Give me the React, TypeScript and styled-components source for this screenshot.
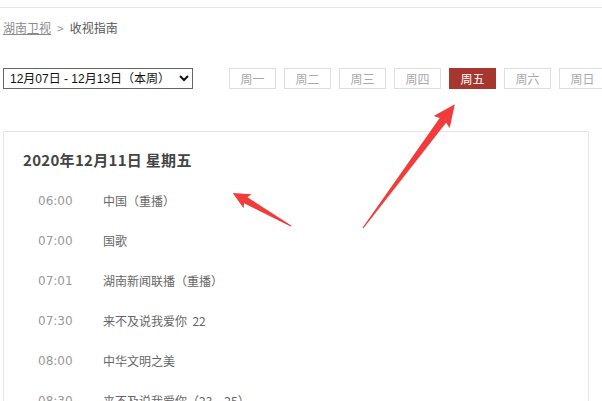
import React, { useState } from 'react';
import styled, { createGlobalStyle } from 'styled-components';

const weekDays = ['周一', '周二', '周三', '周四', '周五', '周六', '周日'];

const programs = [
  { time: '06:00', title: '中国（重播）' },
  { time: '07:00', title: '国歌' },
  { time: '07:01', title: '湖南新闻联播（重播）' },
  { time: '07:30', title: '来不及说我爱你  22' },
  { time: '08:00', title: '中华文明之美' },
  { time: '08:30', title: '来不及说我爱你（23、25）' },
];

// annotation arrow: drawn along +x from the tail, then rotated into place
const arrowPoints = (len: number, head: number, half: number, body: number) =>
  [
    [0, -0.6],
    [len - head + 2, -body],
    [len - head, -half],
    [len, 0],
    [len - head, half],
    [len - head + 2, body],
    [0, 0.6],
  ]
    .map(([x, y]) => `${x},${y}`)
    .join(' ');

const arrows = [
  { x: 291, y: 226, angle: -150.4, len: 67, head: 17, half: 8, body: 3.5 },
  { x: 363, y: 228, angle: -53.4, len: 154, head: 22, half: 10, body: 4 },
];

export default function App() {
  const [activeDay, setActiveDay] = useState('周五');

  return (
    <Page>
      <GlobalStyle />
      <TopRule />
      <Breadcrumb>
        <a href="#">湖南卫视</a>
        <span className="sep">&gt;</span>
        <span>收视指南</span>
      </Breadcrumb>
      <Toolbar>
        <WeekSelect defaultValue="this">
          <option value="this">12月07日 - 12月13日（本周）</option>
        </WeekSelect>
        <DayTabs>
          {weekDays.map((day) => (
            <DayTab key={day} active={activeDay === day} onClick={() => setActiveDay(day)}>
              {day}
            </DayTab>
          ))}
        </DayTabs>
      </Toolbar>
      <Card>
        <DateTitle>2020年12月11日 星期五</DateTitle>
        <ProgramList>
          {programs.map((p) => (
            <ProgramRow key={p.time}>
              <Time>{p.time}</Time>
              <Title>{p.title}</Title>
            </ProgramRow>
          ))}
        </ProgramList>
      </Card>
      <Annotations width="602" height="401" viewBox="0 0 602 401">
        {arrows.map((a, i) => (
          <polygon
            key={i}
            points={arrowPoints(a.len, a.head, a.half, a.body)}
            transform={`translate(${a.x} ${a.y}) rotate(${a.angle})`}
            fill="#f23b3b"
          />
        ))}
      </Annotations>
    </Page>
  );
}

const GlobalStyle = createGlobalStyle`
  html, body {
    margin: 0;
    padding: 0;
    background: #fff;
    overflow: hidden;
  }
`;

const Page = styled.div`
  position: relative;
  width: 602px;
  height: 401px;
  overflow: hidden;
  font-family: "Microsoft YaHei", "Noto Sans CJK SC", sans-serif;
  font-size: 12px;
  color: #555;
`;

const TopRule = styled.div`
  height: 7px;
  border-bottom: 1px solid #e6e6e6;
`;

const Breadcrumb = styled.div`
  height: 40px;
  line-height: 40px;
  padding-left: 3px;
  color: #555;

  a {
    color: #8a8a8a;
    text-decoration: underline;
  }

  .sep {
    color: #999;
    margin: 0 6px;
  }
`;

const Toolbar = styled.div`
  display: flex;
  align-items: center;
  margin-top: 20px;
  padding-left: 3px;
  height: 21px;
  width: 700px;
`;

const WeekSelect = styled.select`
  width: 190px;
  height: 21px;
  padding: 0 2px;
  border: 1px solid #666;
  border-radius: 0;
  background: #fff;
  color: #111;
  font-family: "Liberation Sans", "Noto Sans CJK SC", sans-serif;
  font-size: 12px;
`;

const DayTabs = styled.div`
  display: flex;
  gap: 8px;
  margin-left: 36px;
`;

const DayTab = styled.button<{ active: boolean }>`
  width: 47px;
  height: 21px;
  padding: 0;
  border: 1px solid ${({ active }) => (active ? '#a5372e' : '#dedede')};
  background: ${({ active }) => (active ? '#a5372e' : '#fff')};
  color: ${({ active }) => (active ? '#fff' : '#a8a8a8')};
  font-family: "Microsoft YaHei", "Noto Sans CJK SC", sans-serif;
  font-size: 12px;
  cursor: pointer;
`;

const Card = styled.div`
  margin: 42px 0 0 3px;
  width: 586px;
  box-sizing: border-box;
  border: 1px solid #e6e6e6;
  padding: 18px 20px 0 19px;
`;

const DateTitle = styled.h2`
  margin: 0;
  line-height: 20px;
  font-size: 15px;
  letter-spacing: 0.3px;
  font-weight: bold;
  color: #444;
`;

const ProgramList = styled.div`
  margin-top: 11px;
  padding-left: 15px;
`;

const ProgramRow = styled.div`
  display: flex;
  height: 40px;
  line-height: 40px;
  white-space: pre;
`;

const Time = styled.span`
  width: 65px;
  font-family: "DejaVu Sans", sans-serif;
  font-size: 12px;
  color: #999;
`;

const Title = styled.span`
  color: #666;
  font-size: 12px;
`;

const Annotations = styled.svg`
  position: absolute;
  left: 0;
  top: 0;
  pointer-events: none;
`;
